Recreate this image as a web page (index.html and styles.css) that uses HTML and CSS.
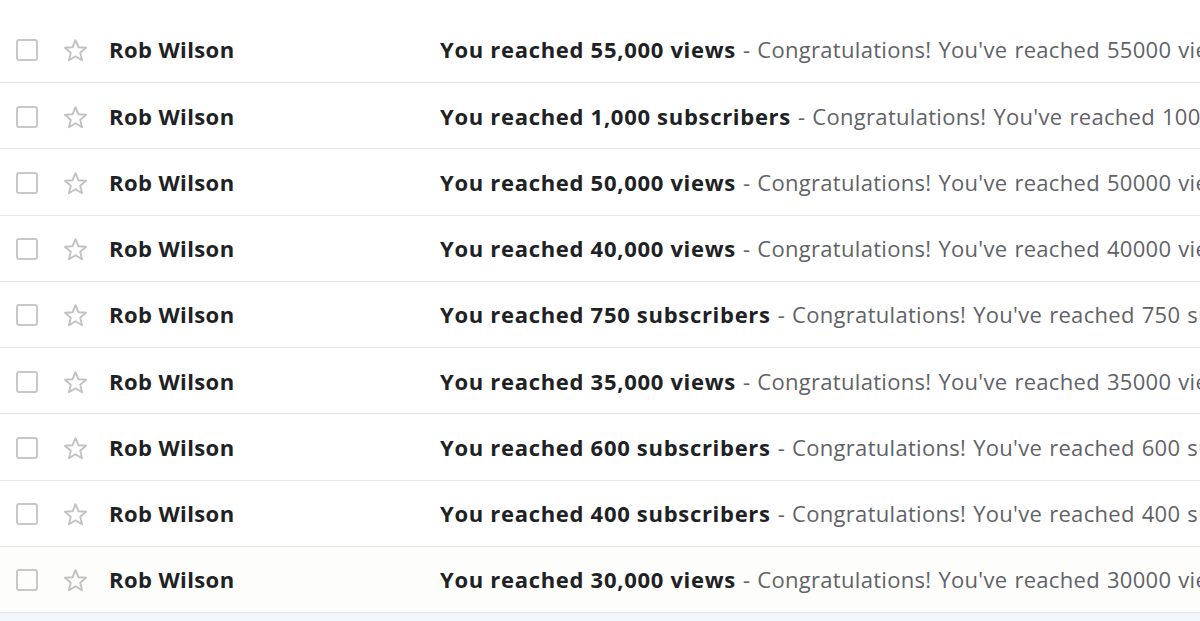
FILE: index.html
```html
<!DOCTYPE html>
<html>
<head>
<meta charset="utf-8">
<link rel="stylesheet" href="styles.css">
</head>
<body>
<div class="list">
  <div class="row"><span class="cb"></span><svg class="star" viewBox="0 0 24 24"><polygon points="12,2.8 14.6,9.1 21.4,9.6 16.2,14 17.8,20.7 12,17.1 6.2,20.7 7.8,14 2.6,9.6 9.4,9.1"/></svg><span class="name">Rob Wilson</span><span class="text"><b>You reached 55,000 views</b><span class="snip"> - Congratulations! You've reached 55000 views on YouTube</span></span></div>
  <div class="row"><span class="cb"></span><svg class="star" viewBox="0 0 24 24"><polygon points="12,2.8 14.6,9.1 21.4,9.6 16.2,14 17.8,20.7 12,17.1 6.2,20.7 7.8,14 2.6,9.6 9.4,9.1"/></svg><span class="name">Rob Wilson</span><span class="text"><b>You reached 1,000 subscribers</b><span class="snip"> - Congratulations! You've reached 1000 subscribers on YouTube</span></span></div>
  <div class="row"><span class="cb"></span><svg class="star" viewBox="0 0 24 24"><polygon points="12,2.8 14.6,9.1 21.4,9.6 16.2,14 17.8,20.7 12,17.1 6.2,20.7 7.8,14 2.6,9.6 9.4,9.1"/></svg><span class="name">Rob Wilson</span><span class="text"><b>You reached 50,000 views</b><span class="snip"> - Congratulations! You've reached 50000 views on YouTube</span></span></div>
  <div class="row"><span class="cb"></span><svg class="star" viewBox="0 0 24 24"><polygon points="12,2.8 14.6,9.1 21.4,9.6 16.2,14 17.8,20.7 12,17.1 6.2,20.7 7.8,14 2.6,9.6 9.4,9.1"/></svg><span class="name">Rob Wilson</span><span class="text"><b>You reached 40,000 views</b><span class="snip"> - Congratulations! You've reached 40000 views on YouTube</span></span></div>
  <div class="row"><span class="cb"></span><svg class="star" viewBox="0 0 24 24"><polygon points="12,2.8 14.6,9.1 21.4,9.6 16.2,14 17.8,20.7 12,17.1 6.2,20.7 7.8,14 2.6,9.6 9.4,9.1"/></svg><span class="name">Rob Wilson</span><span class="text"><b>You reached 750 subscribers</b><span class="snip"> - Congratulations! You've reached 750 subscribers on YouTube</span></span></div>
  <div class="row"><span class="cb"></span><svg class="star" viewBox="0 0 24 24"><polygon points="12,2.8 14.6,9.1 21.4,9.6 16.2,14 17.8,20.7 12,17.1 6.2,20.7 7.8,14 2.6,9.6 9.4,9.1"/></svg><span class="name">Rob Wilson</span><span class="text"><b>You reached 35,000 views</b><span class="snip"> - Congratulations! You've reached 35000 views on YouTube</span></span></div>
  <div class="row"><span class="cb"></span><svg class="star" viewBox="0 0 24 24"><polygon points="12,2.8 14.6,9.1 21.4,9.6 16.2,14 17.8,20.7 12,17.1 6.2,20.7 7.8,14 2.6,9.6 9.4,9.1"/></svg><span class="name">Rob Wilson</span><span class="text"><b>You reached 600 subscribers</b><span class="snip"> - Congratulations! You've reached 600 subscribers on YouTube</span></span></div>
  <div class="row"><span class="cb"></span><svg class="star" viewBox="0 0 24 24"><polygon points="12,2.8 14.6,9.1 21.4,9.6 16.2,14 17.8,20.7 12,17.1 6.2,20.7 7.8,14 2.6,9.6 9.4,9.1"/></svg><span class="name">Rob Wilson</span><span class="text"><b>You reached 400 subscribers</b><span class="snip"> - Congratulations! You've reached 400 subscribers on YouTube</span></span></div>
  <div class="row last"><span class="cb"></span><svg class="star" viewBox="0 0 24 24"><polygon points="12,2.8 14.6,9.1 21.4,9.6 16.2,14 17.8,20.7 12,17.1 6.2,20.7 7.8,14 2.6,9.6 9.4,9.1"/></svg><span class="name">Rob Wilson</span><span class="text"><b>You reached 30,000 views</b><span class="snip"> - Congratulations! You've reached 30000 views on YouTube</span></span></div>
</div>
</body>
</html>
```
FILE: styles.css
```css
html, body {
  margin: 0;
  padding: 0;
  background: #f2f5fc;
  overflow: hidden;
}
body {
  font-family: "Open Sans", "Liberation Sans", sans-serif;
  width: 1200px;
  height: 621px;
}
.list {
  background: #ffffff;
  padding-top: 16.75px;
}
.row {
  display: flex;
  align-items: center;
  height: 66.25px;
  box-sizing: border-box;
  border-bottom: 1px solid #e6e6e6;
  padding-left: 16px;
  white-space: nowrap;
  overflow: hidden;
}
.row.last {
  background: #fdfdfb;
}
.cb {
  flex: none;
  width: 22px;
  height: 22px;
  box-sizing: border-box;
  border: 2px solid #c8c8c8;
  border-radius: 3px;
  margin-top: 2px;
}
.star {
  flex: none;
  width: 27px;
  height: 27px;
  margin-left: 24px;
  margin-top: 3px;
  fill: none;
  stroke: #c2c2c2;
  stroke-width: 1.7;
  stroke-linejoin: round;
}
.name {
  flex: none;
  width: 331px;
  margin-left: 20px;
  font-size: 22px;
  font-weight: 700;
  letter-spacing: 0.4px;
  color: #202124;
}
.text {
  font-size: 22px;
  color: #202124;
  overflow: hidden;
}
.text b {
  font-weight: 700;
  letter-spacing: 0.7px;
}
.snip {
  color: #5f6368;
  font-weight: 400;
  letter-spacing: 0.3px;
  word-spacing: 1px;
}
```
